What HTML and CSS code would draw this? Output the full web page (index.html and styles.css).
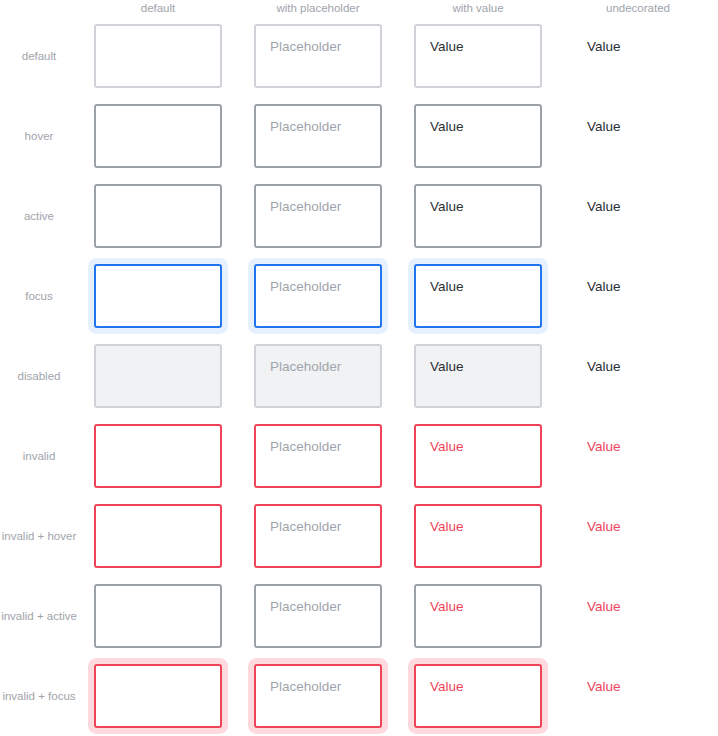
FILE: index.html
```html
<!DOCTYPE html>
<html>
<head>
<meta charset="utf-8">
<link rel="stylesheet" href="styles.css">
</head>
<body>
<div class="grid">
  <div class="head"></div>
  <div class="head">default</div>
  <div class="head">with placeholder</div>
  <div class="head">with value</div>
  <div class="head">undecorated</div>

  <div class="label">default</div>
  <div class="cell"><div class="field"></div></div>
  <div class="cell"><div class="field ph">Placeholder</div></div>
  <div class="cell"><div class="field">Value</div></div>
  <div class="cell"><div class="plain">Value</div></div>

  <div class="label">hover</div>
  <div class="cell"><div class="field hover"></div></div>
  <div class="cell"><div class="field hover ph">Placeholder</div></div>
  <div class="cell"><div class="field hover">Value</div></div>
  <div class="cell"><div class="plain">Value</div></div>

  <div class="label">active</div>
  <div class="cell"><div class="field hover"></div></div>
  <div class="cell"><div class="field hover ph">Placeholder</div></div>
  <div class="cell"><div class="field hover">Value</div></div>
  <div class="cell"><div class="plain">Value</div></div>

  <div class="label">focus</div>
  <div class="cell"><div class="field focus"></div></div>
  <div class="cell"><div class="field focus ph">Placeholder</div></div>
  <div class="cell"><div class="field focus">Value</div></div>
  <div class="cell"><div class="plain">Value</div></div>

  <div class="label">disabled</div>
  <div class="cell"><div class="field disabled"></div></div>
  <div class="cell"><div class="field disabled ph">Placeholder</div></div>
  <div class="cell"><div class="field disabled">Value</div></div>
  <div class="cell"><div class="plain">Value</div></div>

  <div class="label">invalid</div>
  <div class="cell"><div class="field invalid"></div></div>
  <div class="cell"><div class="field invalid ph">Placeholder</div></div>
  <div class="cell"><div class="field invalid red">Value</div></div>
  <div class="cell"><div class="plain red">Value</div></div>

  <div class="label">invalid + hover</div>
  <div class="cell"><div class="field invalid"></div></div>
  <div class="cell"><div class="field invalid ph">Placeholder</div></div>
  <div class="cell"><div class="field invalid red">Value</div></div>
  <div class="cell"><div class="plain red">Value</div></div>

  <div class="label">invalid + active</div>
  <div class="cell"><div class="field hover"></div></div>
  <div class="cell"><div class="field hover ph">Placeholder</div></div>
  <div class="cell"><div class="field hover red">Value</div></div>
  <div class="cell"><div class="plain red">Value</div></div>

  <div class="label">invalid + focus</div>
  <div class="cell"><div class="field invalid ifocus"></div></div>
  <div class="cell"><div class="field invalid ifocus ph">Placeholder</div></div>
  <div class="cell"><div class="field invalid ifocus red">Value</div></div>
  <div class="cell"><div class="plain red">Value</div></div>
</div>
</body>
</html>
```
FILE: styles.css
```css
html, body {
  margin: 0;
  padding: 0;
  background: #ffffff;
}
body {
  font-family: "Liberation Sans", Arial, sans-serif;
}
.grid {
  display: grid;
  grid-template-columns: 78px repeat(4, 160px);
  grid-template-rows: 16px;
  grid-auto-rows: 80px;
}
.head {
  font-size: 11.5px;
  color: #a0a4ab;
  text-align: center;
  line-height: 16px;
}
.label {
  font-size: 11.5px;
  color: #a0a4ab;
  display: flex;
  align-items: center;
  justify-content: center;
  white-space: nowrap;
}
.cell {
  display: flex;
  align-items: center;
  padding-left: 16px;
}
.field {
  width: 128px;
  height: 64px;
  box-sizing: border-box;
  border: 2px solid #cfd2d6;
  border-radius: 3px;
  padding: 11px 14px 9px;
  font-size: 13.5px;
  line-height: 20px;
  color: #2b2f36;
  background: #fff;
}
.plain {
  width: 128px;
  height: 64px;
  box-sizing: border-box;
  padding: 13px 13px 11px;
  font-size: 13.5px;
  line-height: 20px;
  color: #2b2f36;
}
.ph {
  color: #a0a5ac;
}
.hover {
  border-color: #9ca0a7;
}
.focus {
  border-color: #1f74f0;
  box-shadow: 0 0 0 6px #e7f0fd;
}
.disabled {
  background: #f1f2f4;
  border-color: #cfd2d6;
}
.invalid {
  border-color: #f0435a;
}
.ifocus {
  box-shadow: 0 0 0 6px #fddade;
}
.red {
  color: #f0435a;
}
```
